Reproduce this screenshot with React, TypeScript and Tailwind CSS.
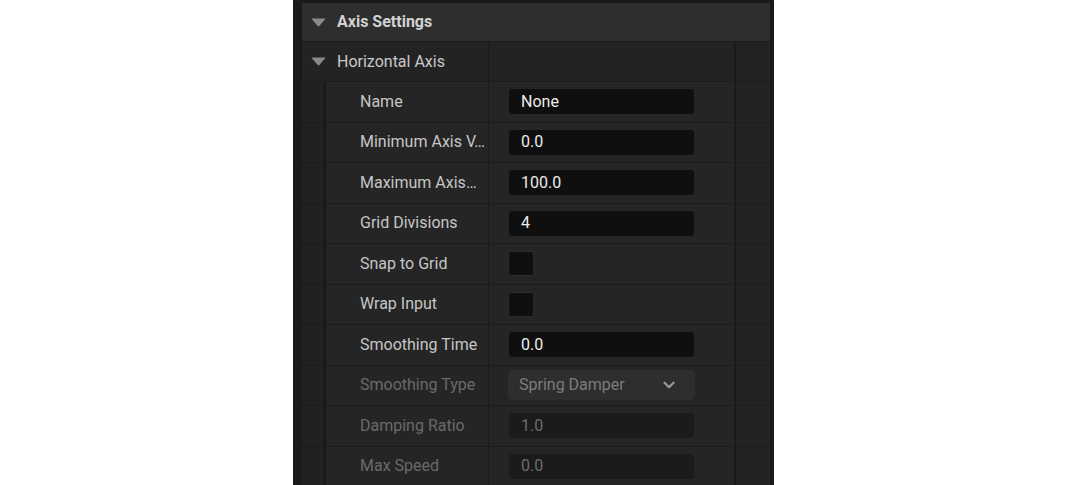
import { ChevronDown } from 'lucide-react'

type Row = {
  label: string
  kind: 'text' | 'check' | 'select'
  value?: string
  disabled?: boolean
}

const ROWS: Row[] = [
  { label: 'Name', kind: 'text', value: 'None' },
  { label: 'Minimum Axis V…', kind: 'text', value: '0.0' },
  { label: 'Maximum Axis…', kind: 'text', value: '100.0' },
  { label: 'Grid Divisions', kind: 'text', value: '4' },
  { label: 'Snap to Grid', kind: 'check' },
  { label: 'Wrap Input', kind: 'check' },
  { label: 'Smoothing Time', kind: 'text', value: '0.0' },
  { label: 'Smoothing Type', kind: 'select', value: 'Spring Damper', disabled: true },
  { label: 'Damping Ratio', kind: 'text', value: '1.0', disabled: true },
  { label: 'Max Speed', kind: 'text', value: '0.0', disabled: true },
]

function Arrow() {
  return (
    <svg width="15" height="9" viewBox="0 0 15 9" className="shrink-0">
      <path d="M1.2 0.5 H13.8 Q14.8 0.5 14.1 1.3 L8.3 8 Q7.5 8.8 6.7 8 L0.9 1.3 Q0.2 0.5 1.2 0.5 Z" fill="#8a8a8a" />
    </svg>
  )
}

function ValueCell({ row }: { row: Row }) {
  if (row.kind === 'check') {
    return <div className="w-[26px] h-[25px] rounded-[3px] bg-[#0f0f0f] border border-[#2c2c2c]" />
  }
  if (row.kind === 'select') {
    return (
      <div className="w-[187px] h-[30px] rounded-[5px] bg-[#2e2e2e] flex items-center justify-between pl-[11px] pr-[17px]">
        <span className="text-[#7c7c7c]">{row.value}</span>
        <ChevronDown className="w-[18px] h-[18px] text-[#9a9a9a]" strokeWidth={3} />
      </div>
    )
  }
  return (
    <div
      className={`w-[187px] h-[27px] rounded-[4px] flex items-center px-[12px] border ${
        row.disabled ? 'bg-[#1b1b1b] border-[#262626] text-[#6e6e6e]' : 'bg-[#0f0f0f] border-[#262626] text-[#ececec]'
      }`}
    >
      {row.value}
    </div>
  )
}

export default function App() {
  return (
    <div className="w-full h-[485px] bg-white overflow-hidden" style={{ fontFamily: 'Roboto, "Noto Sans", sans-serif' }}>
      <div className="ml-[293px] w-[481px] h-full bg-[#1a1a1a] pt-[3px] pl-[9px] pr-[4px] text-[16px]">
        {/* Category header */}
        <div className="h-[38px] bg-[#2e2e2e] flex items-center gap-[11px] pl-[9px]">
          <Arrow />
          <span className="font-bold text-[#d2d2d2]">Axis Settings</span>
        </div>

        {/* Sub group */}
        <div className="mt-[1px] h-[39px] flex">
          <div className="w-[187px] bg-[#232323] flex items-center gap-[11px] pl-[9px] border-r border-[#1a1a1a]">
            <Arrow />
            <span className="text-[#cacaca]">Horizontal Axis</span>
          </div>
          <div className="w-[247px] bg-[#232323] border-r-2 border-[#1a1a1a]" />
          <div className="flex-1 bg-[#222222]" />
        </div>

        {/* Properties */}
        <div className="flex flex-col">
          {ROWS.map((row) => (
            <div key={row.label} className="h-[40.5px] flex border-t border-[#1b1b1b]">
              <div className="w-[21px] bg-[#212121]" />
              <div className="w-[3px] bg-[#1a1a1a]" />
              <div
                className={`w-[163px] bg-[#252525] flex items-center pl-[34px] whitespace-nowrap overflow-hidden border-r border-[#1a1a1a] ${
                  row.disabled ? 'text-[#6a6a6a]' : 'text-[#c6c6c6]'
                }`}
              >
                {row.label}
              </div>
              <div className="w-[247px] bg-[#252525] flex items-center pl-[19px] border-r-2 border-[#1a1a1a]">
                <ValueCell row={row} />
              </div>
              <div className="flex-1 bg-[#222222]" />
            </div>
          ))}
        </div>
      </div>
    </div>
  )
}
